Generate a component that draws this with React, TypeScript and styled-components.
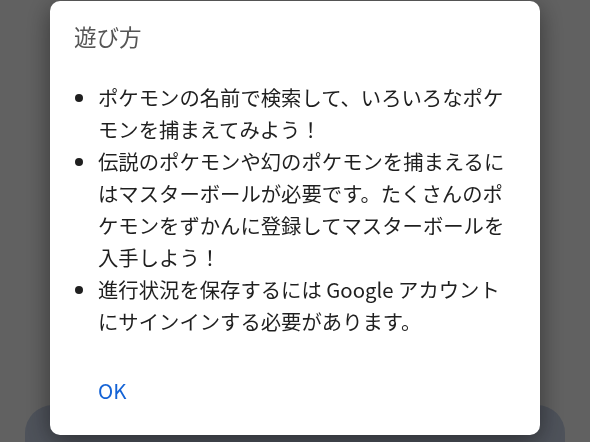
import styled, { createGlobalStyle } from 'styled-components'

const GlobalStyle = createGlobalStyle`
  html, body {
    margin: 0;
    padding: 0;
    width: 590px;
    height: 442px;
    overflow: hidden;
    background: #ffffff;
    font-family: 'Noto Sans CJK JP', 'Noto Sans', sans-serif;
  }
`

const Page = styled.div`
  width: 590px;
  height: 442px;
  box-sizing: border-box;
  padding: 405px 25px 0;
`

// the card behind the dialog, only its top edge shows
const CounterCard = styled.div`
  height: 90px;
  border-radius: 28px;
  background: #cdd8ed;
  display: flex;
  justify-content: flex-start;
  padding: 28px 0 0 122px;
  box-sizing: border-box;
  font-size: 26px;
  font-weight: 700;
  color: #111;
`

const Overlay = styled.div`
  position: fixed;
  inset: 0;
  background: rgba(0, 0, 0, 0.62);
  display: flex;
  justify-content: center;
  align-items: flex-start;
  padding-top: 1px;
`

const Dialog = styled.div`
  width: 490px;
  height: 434px;
  box-sizing: border-box;
  background: #ffffff;
  border-radius: 10px;
  box-shadow: 0 6px 26px rgba(0, 0, 0, 0.45);
  padding: 20px 24px 0;
  display: flex;
  flex-direction: column;
`

const Title = styled.h2`
  margin: 0;
  font-size: 22.5px;
  line-height: 30px;
  font-weight: 400;
  color: #555555;
`

const Rules = styled.ul`
  margin: 30px 0 0;
  padding: 0 0 0 24px;
  width: 414px;
  font-size: 20.35px;
  line-height: 32px;
  color: #1f1f1f;
`

const Rule = styled.li`
  &::marker {
    font-size: 21px;
  }
`

const Actions = styled.div`
  display: flex;
  margin-top: 35px;
  padding-left: 24px;
`

const TextButton = styled.button`
  border: none;
  background: none;
  padding: 0;
  font-family: inherit;
  font-size: 20.5px;
  line-height: 36px;
  color: #1463d6;
  cursor: pointer;
`

export default function App() {
  return (
    <>
      <GlobalStyle />
      <Page>
        <CounterCard>0/151</CounterCard>
      </Page>
      <Overlay>
        <Dialog>
          <Title>遊び方</Title>
          <Rules>
            <Rule>ポケモンの名前で検索して、いろいろなポケモンを捕まえてみよう！</Rule>
            <Rule>
              伝説のポケモンや幻のポケモンを捕まえるにはマスターボールが必要です。たくさんのポケモンをずかんに登録してマスターボールを入手しよう！
            </Rule>
            <Rule>進行状況を保存するには Google アカウントにサインインする必要があります。</Rule>
          </Rules>
          <Actions>
            <TextButton>OK</TextButton>
          </Actions>
        </Dialog>
      </Overlay>
    </>
  )
}
